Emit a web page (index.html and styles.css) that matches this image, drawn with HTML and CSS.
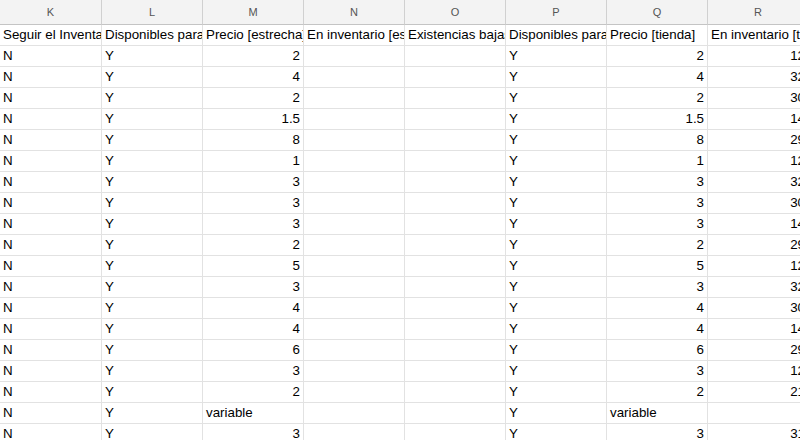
FILE: index.html
```html
<!DOCTYPE html>
<html>
<head>
<meta charset="utf-8">
<link rel="stylesheet" href="styles.css">
</head>
<body>
<div class="sheet" id="sheet">
  <div class="hd">K</div><div class="hd">L</div><div class="hd">M</div><div class="hd">N</div><div class="hd">O</div><div class="hd">P</div><div class="hd">Q</div><div class="hd">R</div>
  <div class="c">Seguir el Inventario</div><div class="c">Disponibles para venta [estrecha]</div><div class="c">Precio [estrecha]</div><div class="c">En inventario [estrecha]</div><div class="c">Existencias bajas [estrecha]</div><div class="c">Disponibles para venta [tienda]</div><div class="c">Precio [tienda]</div><div class="c">En inventario [tienda]</div>
</div>
<script src="script.js"></script>
</body>
</html>
```
FILE: script.js
```js
var m = ["2","4","2","1.5","8","1","3","3","3","2","5","3","4","4","6","3","2","variable","3"];
var r = ["12","32","30","14","29","12","32","30","14","29","12","32","30","14","29","12","21","","31"];
var s = document.getElementById("sheet");
var html = "";
for (var i = 0; i < m.length; i++) {
  var isNum = m[i] !== "variable";
  var mc = isNum ? "c num" : "c";
  html += '<div class="c">N</div><div class="c">Y</div>' +
    '<div class="' + mc + '">' + m[i] + '</div><div class="c"></div><div class="c"></div>' +
    '<div class="c">Y</div><div class="' + mc + '">' + m[i] + '</div><div class="c num">' + r[i] + '</div>';
}
s.insertAdjacentHTML("beforeend", html);
```
FILE: styles.css
```css
html, body {
  margin: 0;
  padding: 0;
  background: #fff;
  overflow: hidden;
}
body {
  width: 800px;
  height: 440px;
  font-family: "Liberation Sans", Arial, sans-serif;
}
.sheet {
  display: grid;
  grid-template-columns: 102px repeat(7, 101px);
  grid-auto-rows: 21px;
  grid-template-rows: 25px;
  width: 809px;
}
.hd {
  box-sizing: border-box;
  background: #f3f3f3;
  border-right: 1px solid #d0d0d0;
  border-bottom: 1px solid #c4c4c4;
  color: #555;
  font-size: 11px;
  text-align: center;
  line-height: 24px;
}
.c {
  box-sizing: border-box;
  border-right: 1px solid #e2e2e2;
  border-bottom: 1px solid #e2e2e2;
  font-size: 13.33px;
  color: #000;
  line-height: 20px;
  padding: 0 3px;
  white-space: nowrap;
  overflow: hidden;
  text-overflow: clip;
}
.num {
  text-align: right;
}
```
